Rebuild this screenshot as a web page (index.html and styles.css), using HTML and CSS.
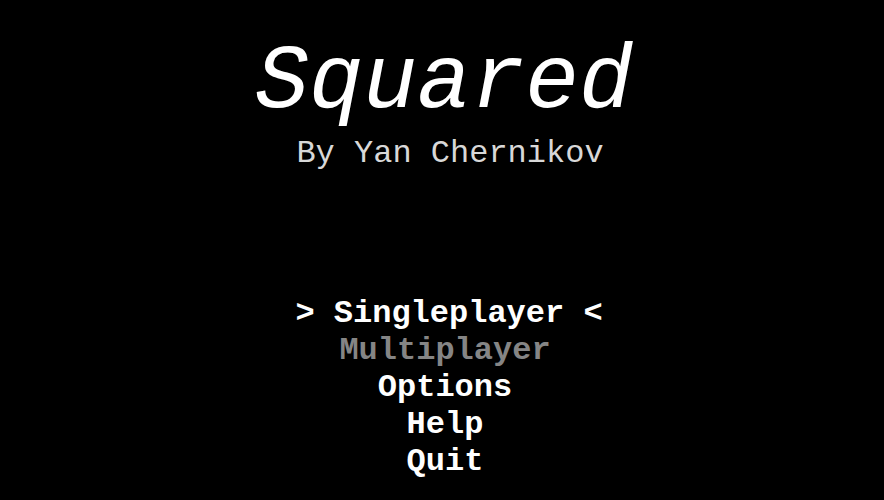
FILE: index.html
```html
<!DOCTYPE html>
<html>
<head>
<meta charset="utf-8">
<link rel="stylesheet" href="styles.css">
</head>
<body>
<main class="screen">
  <header class="title-block">
    <h1 class="title">Squared</h1>
    <p class="author">By Yan Chernikov</p>
  </header>
  <ul class="menu">
    <li class="item selected">&gt; Singleplayer &lt;</li>
    <li class="item disabled">Multiplayer</li>
    <li class="item">Options</li>
    <li class="item">Help</li>
    <li class="item">Quit</li>
  </ul>
</main>
</body>
</html>
```
FILE: styles.css
```css
html, body {
  margin: 0;
  padding: 0;
  background: #000;
  width: 884px;
  height: 500px;
  overflow: hidden;
}
.screen {
  display: flex;
  flex-direction: column;
  align-items: center;
  font-family: "Courier New", "Nimbus Mono PS", "FreeMono", "Liberation Mono", monospace;
  color: #fff;
  padding-top: 33px;
}
.title-block {
  display: flex;
  flex-direction: column;
  align-items: center;
}
.title {
  margin: 0;
  font-size: 90px;
  font-weight: normal;
  font-style: italic;
  line-height: 100px;
  color: #fff;
  padding-left: 4px;
}
.author {
  margin: 3px 0 0 0;
  font-size: 32px;
  line-height: 36px;
  color: #d8d8d8;
  padding-left: 16px;
}
.menu {
  list-style: none;
  margin: 123px 0 0 0;
  padding: 0;
  display: flex;
  flex-direction: column;
  align-items: center;
}
.item {
  font-size: 32px;
  font-weight: bold;
  line-height: 37px;
  color: #fff;
  padding-left: 6px;
}
.item.selected {
  padding-left: 14px;
}
.item.disabled {
  color: #858585;
}
```
